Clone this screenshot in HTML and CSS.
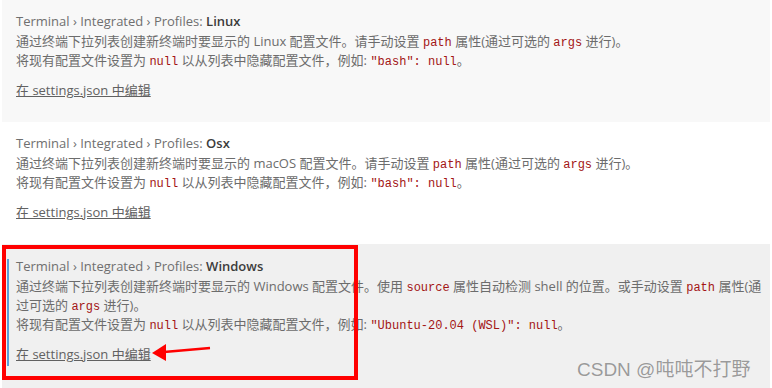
FILE: index.html
```html
<!DOCTYPE html>
<html lang="zh">
<head>
<meta charset="utf-8">
<link rel="stylesheet" href="styles.css">
</head>
<body>
<div class="list">
  <div class="item hover">
    <div class="title"><span class="cat">Terminal › Integrated › Profiles: </span><span class="label">Linux</span></div>
    <div class="desc">
      <p>通过终端下拉列表创建新终端时要显示的 Linux 配置文件。请手动设置 <code>path</code> 属性(通过可选的 <code>args</code> 进行)。</p>
      <p>将现有配置文件设置为 <code>null</code> 以从列表中隐藏配置文件，例如: <code>"bash": null</code>。</p>
    </div>
    <a class="edit" href="#">在 settings.json 中编辑</a>
  </div>
  <div class="item">
    <div class="title"><span class="cat">Terminal › Integrated › Profiles: </span><span class="label">Osx</span></div>
    <div class="desc">
      <p>通过终端下拉列表创建新终端时要显示的 macOS 配置文件。请手动设置 <code>path</code> 属性(通过可选的 <code>args</code> 进行)。</p>
      <p>将现有配置文件设置为 <code>null</code> 以从列表中隐藏配置文件，例如: <code>"bash": null</code>。</p>
    </div>
    <a class="edit" href="#">在 settings.json 中编辑</a>
  </div>
  <div class="item focused">
    <div class="title"><span class="cat">Terminal › Integrated › Profiles: </span><span class="label">Windows</span></div>
    <div class="desc">
      <p>通过终端下拉列表创建新终端时要显示的 Windows 配置文件。使用 <code>source</code> 属性自动检测 shell 的位置。或手动设置 <code>path</code> 属性(通过可选的 <code>args</code> 进行)。</p>
      <p>将现有配置文件设置为 <code>null</code> 以从列表中隐藏配置文件，例如: <code>"Ubuntu-20.04 (WSL)": null</code>。</p>
    </div>
    <a class="edit" href="#">在 settings.json 中编辑</a>
    <div class="redbox"></div>
    <svg class="arrow" width="70" height="24" viewBox="0 0 70 24">
      <line x1="58" y1="6" x2="12" y2="10" stroke="#ff0000" stroke-width="2.5"/>
      <polygon points="0,11 14,2 14,19" fill="#ff0000"/>
    </svg>
  </div>
</div>
<div class="watermark">CSDN @吨吨不打野</div>
</body>
</html>
```

FILE: styles.css
```css
html, body {
  margin: 0;
  padding: 0;
  background: #ffffff;
}
body {
  width: 772px;
  height: 388px;
  overflow: hidden;
  position: relative;
  font-family: "Open Sans", "Noto Sans CJK SC", sans-serif;
  font-size: 13px;
  color: #616161;
}
.list {
  padding-left: 2px;
  width: 768px;
}
.item {
  position: relative;
  padding: 11px 8px 20px 14px;
  height: 91px;
}
.item.hover {
  background: #f8f8f8;
}
.item.focused {
  background: #f0f0f0;
  height: 120px;
  padding-top: 12px;
}
.item.focused::before {
  content: "";
  position: absolute;
  left: 5px;
  top: 15px;
  width: 2px;
  height: 107px;
  background: #5a9fd8;
}
.title {
  line-height: 20px;
  height: 20px;
  color: #6f6f6f;
  white-space: nowrap;
}
.title .label {
  font-weight: 600;
  color: #3c3c3c;
}
.desc {
  margin-top: 1px;
  color: #6c6c6c;
}
.desc p {
  margin: 0;
  line-height: 19px;
}
code {
  font-family: "Liberation Mono", "DejaVu Sans Mono", monospace;
  font-size: 12px;
  line-height: 1;
  color: #a31515;
}
.edit {
  display: inline-block;
  margin-top: 11px;
  line-height: 19px;
  color: #616161;
  text-decoration: underline;
}
.redbox {
  position: absolute;
  left: 0;
  top: 1px;
  width: 348px;
  height: 127px;
  border: 4px solid #ff0000;
}
.arrow {
  position: absolute;
  left: 150px;
  top: 98px;
}
.watermark {
  position: absolute;
  left: 577px;
  top: 354px;
  font-family: "Liberation Sans", "Noto Sans CJK SC", sans-serif;
  font-size: 19px;
  color: #9a9a9a;
  text-shadow: 0 0 1px #ffffff;
  white-space: nowrap;
}
```
